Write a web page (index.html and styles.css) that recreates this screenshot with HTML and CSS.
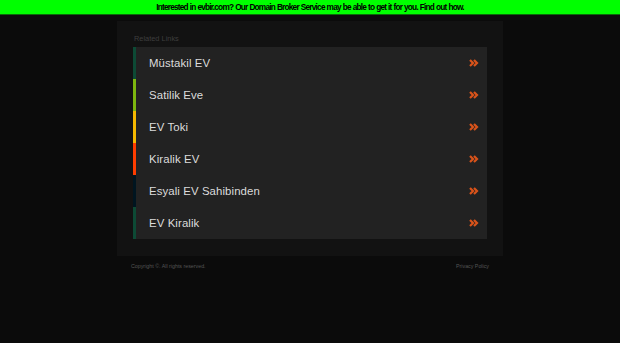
FILE: index.html
```html
<!DOCTYPE html>
<html>
<head>
<meta charset="utf-8">
<link rel="stylesheet" href="styles.css">
</head>
<body>
<div class="topbar"><a href="#">Interested in evbir.com? Our Domain Broker Service may be able to get it for you. Find out how.</a></div>
<div class="wrap">
  <div class="box">
    <div class="label">Related Links</div>
    <ul class="links">
      <li class="c1"><span>Müstakil EV</span><svg class="arr" viewBox="0 0 10 8" width="10" height="8"><path d="M1 1 L4 4 L1 7 M5 1 L8 4 L5 7"/></svg></li>
      <li class="c2"><span>Satilik Eve</span><svg class="arr" viewBox="0 0 10 8" width="10" height="8"><path d="M1 1 L4 4 L1 7 M5 1 L8 4 L5 7"/></svg></li>
      <li class="c3"><span>EV Toki</span><svg class="arr" viewBox="0 0 10 8" width="10" height="8"><path d="M1 1 L4 4 L1 7 M5 1 L8 4 L5 7"/></svg></li>
      <li class="c4"><span>Kiralik EV</span><svg class="arr" viewBox="0 0 10 8" width="10" height="8"><path d="M1 1 L4 4 L1 7 M5 1 L8 4 L5 7"/></svg></li>
      <li class="c5"><span>Esyali EV Sahibinden</span><svg class="arr" viewBox="0 0 10 8" width="10" height="8"><path d="M1 1 L4 4 L1 7 M5 1 L8 4 L5 7"/></svg></li>
      <li class="c6"><span>EV Kiralik</span><svg class="arr" viewBox="0 0 10 8" width="10" height="8"><path d="M1 1 L4 4 L1 7 M5 1 L8 4 L5 7"/></svg></li>
    </ul>
  </div>
  <div class="footer">
    <span>Copyright ©. All rights reserved.</span>
    <span>Privacy Policy</span>
  </div>
</div>
</body>
</html>
```
FILE: styles.css
```css
html, body {
  margin: 0;
  padding: 0;
  background: #0b0b0b;
  font-family: "Liberation Sans", Arial, sans-serif;
}
.topbar {
  height: 14px;
  background: #00ff00;
  border-bottom: 1px solid #0a6a0a;
  display: flex;
  align-items: center;
  justify-content: center;
}
.topbar a {
  color: #000;
  text-decoration: none;
  font-weight: bold;
  font-size: 8.3px;
  letter-spacing: -0.8px;
  word-spacing: 0.4px;
  line-height: 14px;
}
.wrap {
  width: 386px;
  margin: 6px auto 0;
}
.box {
  background: #121212;
  padding: 13px 16px 17px;
}
.label {
  color: #3e3e3e;
  font-size: 7.4px;
  line-height: 10px;
  height: 13px;
  padding-left: 1px;
}
.links {
  list-style: none;
  margin: 0;
  padding: 0;
  background: #222222;
}
.links li {
  height: 32px;
  display: flex;
  align-items: center;
  justify-content: space-between;
  border-left: 3px solid #0d4a35;
  padding: 0 8px 0 13px;
  color: #dcdcdc;
  font-size: 11.4px;
  letter-spacing: 0.1px;
}
.links li.c2 { border-left-color: #7db70f; }
.links li.c3 { border-left-color: #f5b800; }
.links li.c4 { border-left-color: #ff3d00; }
.links li.c5 { border-left-color: #001520; }
.links li.c6 { border-left-color: #0d4a35; }
.arr path {
  fill: none;
  stroke: #d9531a;
  stroke-width: 2.2;
}
.footer {
  display: flex;
  justify-content: space-between;
  padding: 6px 14px 0;
  color: #555;
  font-size: 5.3px;
  line-height: 8px;
}
```
